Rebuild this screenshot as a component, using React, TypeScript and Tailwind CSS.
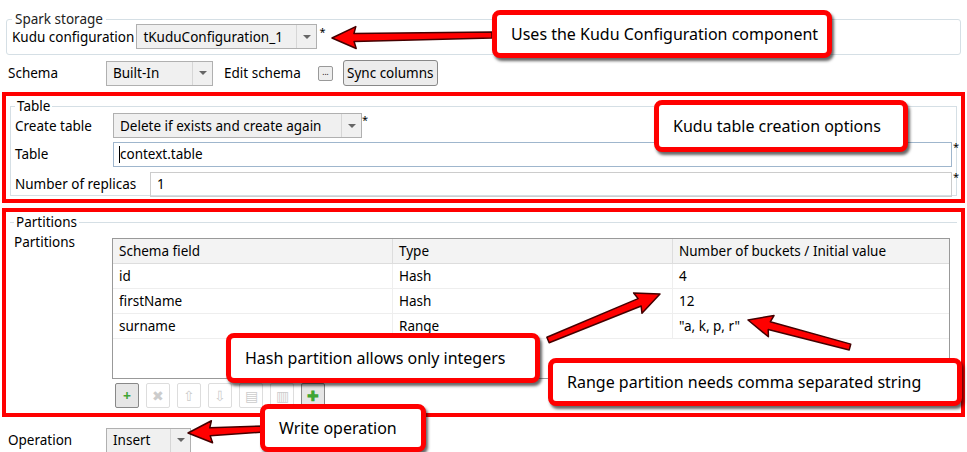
import React from "react";

const font = { fontFamily: '"Noto Sans", "Open Sans", sans-serif' };

function Combo({ value, className }: { value: string; className: string }) {
  return (
    <div className={`flex items-center border border-[#b0b0b0] bg-[#f0f0f0] h-[25px] ${className}`}>
      <span className="flex-1 px-1.5 truncate">{value}</span>
      <span className="w-[20px] h-full border-l border-[#d6d6d6] flex items-center justify-center">
        <span className="w-0 h-0 border-l-[4px] border-r-[4px] border-t-[4px] border-l-transparent border-r-transparent border-t-[#666]" />
      </span>
    </div>
  );
}

function Callout({ text, className }: { text: string; className: string }) {
  return (
    <div
      className={`absolute bg-white border-[5px] border-[#ff0000] rounded-[8px] shadow-[2px_3px_3px_rgba(0,0,0,0.6)] flex items-center text-[16px] whitespace-nowrap text-black ${className}`}
    >
      {text}
    </div>
  );
}

const rows = [
  ["id", "Hash", "4"],
  ["firstName", "Hash", "12"],
  ["surname", "Range", '"a, k, p, r"'],
];

function Arrow({ x1, y1, x2, y2 }: { x1: number; y1: number; x2: number; y2: number }) {
  const a = Math.atan2(y2 - y1, x2 - x1);
  const len = Math.hypot(x2 - x1, y2 - y1);
  const deg = (a * 180) / Math.PI;
  return (
    <g transform={`translate(${x1} ${y1}) rotate(${deg})`}>
      <polygon
        points={`0,-3 ${len - 22},-4 ${len - 24},-11 ${len},0 ${len - 24},11 ${len - 22},4 0,3`}
        fill="#ff0000"
        stroke="#400"
        strokeWidth="1.5"
        strokeLinejoin="round"
      />
    </g>
  );
}

export default function App() {
  return (
    <div className="relative w-[967px] h-[452px] bg-white text-[13.5px] text-black overflow-hidden" style={font}>
      <div className="px-[6px] pt-[9px]">
        <fieldset className="border border-[#d5dfe5] rounded-[3px] px-[5px] pb-[2px] h-[46px]">
          <legend className="px-[3px] -mb-[5px] text-[#222]">Spark storage</legend>
          <div className="flex items-center gap-[2px]">
            <span>Kudu configuration</span>
            <Combo value="tKuduConfiguration_1" className="w-[181px]" />
            <span className="self-start text-[11px]">*</span>
          </div>
        </fieldset>
      </div>
      <div className="flex items-center h-[36px] px-[8px]">
        <span className="w-[98px]">Schema</span>
        <Combo value="Built-In" className="w-[107px]" />
        <span className="ml-[11px] w-[94px]">Edit schema</span>
        <span className="w-[15px] h-[15px] border border-[#999] rounded-[2px] bg-[#eee] text-[8px] leading-[10px] text-center">...</span>
        <span className="ml-[10px] border border-[#888] rounded-[3px] bg-[#ececec] px-[3px] h-[26px] flex items-center">Sync columns</span>
      </div>
      <div className="mx-[2px] mt-[1px] border-[4px] border-[#ff0000] h-[111px] px-[4px]">
        <fieldset className="border border-[#d5dfe5] h-[100px] px-[4px]">
          <legend className="px-[2px] -mb-[4px]">Table</legend>
          <div className="flex items-center h-[27px]">
            <span className="w-[98px]">Create table</span>
            <Combo value="Delete if exists and create again" className="w-[249px]" />
            <span className="self-start text-[11px]">*</span>
          </div>
          <div className="flex items-center h-[30px]">
            <span className="w-[98px]">Table</span>
            <div className="flex-1 h-[25px] border border-[#9fb6cd] flex items-center px-[5px]">
              <span className="border-l border-black h-[17px]" />context.table
            </div>
            <span className="self-start text-[11px] -mr-[9px] w-[9px] pl-[1px]">*</span>
          </div>
          <div className="flex items-center h-[30px]">
            <span className="w-[135px]">Number of replicas</span>
            <div className="flex-1 h-[25px] border border-[#ccc] flex items-center px-[6px]">1</div>
            <span className="self-start text-[11px] -mr-[9px] w-[9px] pl-[1px]">*</span>
          </div>
        </fieldset>
      </div>
      <div className="mx-[2px] mt-[5px] border-[4px] border-[#ff0000] h-[209px] px-[4px]">
        <fieldset className="border-t border-[#d5dfe5] h-full px-[4px]">
          <legend className="px-[2px] -mb-[4px]">Partitions</legend>
          <div className="flex">
            <span className="w-[98px] pt-[4px]">Partitions</span>
            <div className="flex-1 mr-[3px]">
              <div className="border border-[#999] h-[141px] mt-[10px]">
                <div className="flex h-[25px] bg-[#f3f3f3] border-b border-[#ddd]">
                  <span className="w-[280px] px-[6px] flex items-center border-r border-[#ddd]">Schema field</span>
                  <span className="w-[280px] px-[6px] flex items-center border-r border-[#ddd]">Type</span>
                  <span className="flex-1 px-[6px] flex items-center">Number of buckets / Initial value</span>
                </div>
                {rows.map((r) => (
                  <div key={r[0]} className="flex h-[25px] border-b border-[#eee]">
                    <span className="w-[280px] px-[6px] flex items-center border-r border-[#eee]">{r[0]}</span>
                    <span className="w-[280px] px-[6px] flex items-center border-r border-[#eee]">{r[1]}</span>
                    <span className="flex-1 px-[6px] flex items-center">{r[2]}</span>
                  </div>
                ))}
              </div>
              <div className="flex gap-[7px] mt-[4px] ml-[3px]">
                {["+", "✖", "⇧", "⇩", "▤", "▥", "✚"].map((g, i) => (
                  <span
                    key={i}
                    className={`w-[24px] h-[25px] rounded-[2px] border flex items-center justify-center text-[14px] ${
                      i === 0 || i === 6 ? "border-[#888] bg-[#e6e6e6] text-[#3fa535] font-bold" : "border-[#ddd] text-[#ccc]"
                    }`}
                  >
                    {g}
                  </span>
                ))}
              </div>
            </div>
          </div>
        </fieldset>
      </div>
      <div className="flex items-center h-[46px] px-[8px]">
        <span className="w-[98px]">Operation</span>
        <Combo value="Insert" className="w-[85px]" />
      </div>

      <svg className="absolute inset-0 pointer-events-none" width="967" height="452">
        <Arrow x1={492} y1={35} x2={332} y2={38} />
        <Arrow x1={548} y1={340} x2={660} y2={294} />
        <Arrow x1={850} y1={347} x2={748} y2={320} />
        <Arrow x1={264} y1={429} x2={188} y2={433} />
      </svg>
      <Callout text="Uses the Kudu Configuration component" className="left-[492px] top-[10px] w-[340px] h-[48px] pl-[14px]" />
      <Callout text="Kudu table creation options" className="left-[654px] top-[100px] w-[254px] h-[52px] pl-[14px]" />
      <Callout text="Hash partition allows only integers" className="left-[226px] top-[333px] w-[314px] h-[50px] pl-[14px]" />
      <Callout text="Range partition needs comma separated string" className="left-[548px] top-[358px] w-[414px] h-[48px] pl-[14px]" />
      <Callout text="Write operation" className="left-[260px] top-[404px] w-[166px] h-[48px] pl-[14px]" />
    </div>
  );
}
